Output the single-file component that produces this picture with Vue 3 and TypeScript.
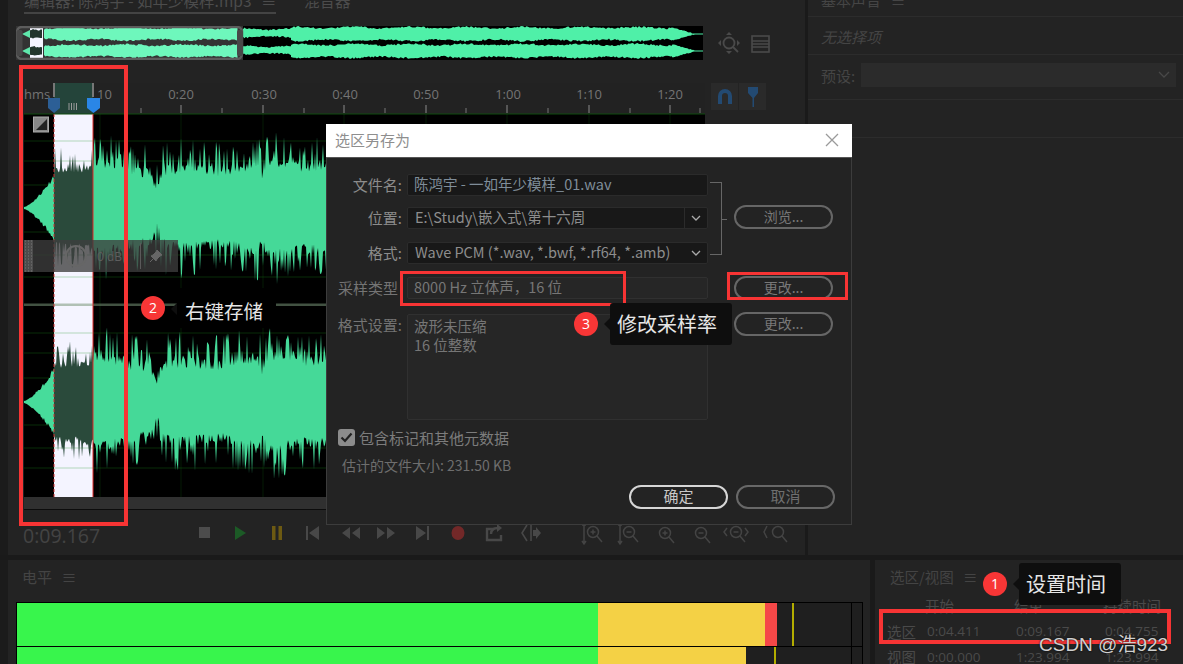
<script setup lang="ts">
function rng(seed: number) {
  let s = seed
  return () => {
    s = (s * 16807) % 2147483647
    return s / 2147483647
  }
}

function band(from: number, to: number, cy: number, seed: number, step: number, env: (x: number, r: () => number) => number): string {
  const r = rng(seed)
  const r2 = rng(seed + 91)
  const top: string[] = []
  const bottom: string[] = []
  for (let x = from; x <= to; x += step) {
    top.push(`${x},${(cy - env(x, r)).toFixed(1)}`)
    bottom.unshift(`${x},${(cy + env(x, r2) * 0.98).toFixed(1)}`)
  }
  return `M${top.join('L')}L${bottom.join('L')}Z`
}

const mainEnv = (x: number, r: () => number) => {
  const a = r()
  const b = r()
  const swell = 4 * Math.sin(x / 37) + 3 * Math.sin(x / 13)
  const dip = 18 * Math.exp(-Math.pow((x - 157) / 4, 2)) + 14 * Math.exp(-Math.pow((x - 262) / 3, 2))
  const spike = b > 0.5 ? Math.pow(a, 1.1) * 38 : a * 11
  return 35 + swell + spike - dip
}
const selEnv = (x: number, r: () => number) => 8 + mainEnv(x, r) * 0.72
const introEnv = (x: number, r: () => number) => {
  const t = (x - 24) / 30
  return 1 + Math.pow(t, 1.5) * 28 + r() * 6 * t
}

const waves = [208, 402].map((cy, i) => ({
  intro: band(24, 54, cy, 11 + i, 1, introEnv),
  sel: band(54, 93, cy, 37 + i, 1, selEnv),
  rest: band(93, 705, cy, 71 + i * 13, 1, mainEnv),
}))

function strip(from: number, to: number, cy: number, seed: number, base: number): string {
  const env = (x: number, r: () => number) => base + r() * 1.8 + 0.8 * Math.sin(x / 9)
  return band(from, to, cy, seed, 1.5, env)
}
const fade = (x: number, r: () => number) => Math.max(0.5, (694 - x) * 0.28 + r())

const overview = {
  hi: [strip(44, 238, 34, 5, 5), strip(44, 238, 51, 6, 5)],
  lo: [strip(243, 291, 33, 7, 3), strip(243, 291, 50, 8, 3), strip(291, 672, 34, 9, 5.5), strip(291, 672, 51, 10, 5.5)],
  intro: [band(22, 30, 34, 3, 1, (x) => (x - 22) * 0.5), band(22, 30, 51, 4, 1, (x) => (x - 22) * 0.5)],
  sel: [strip(30, 43, 34, 1, 4), strip(30, 43, 51, 2, 4)],
  tail: [band(672, 703, 34, 12, 1, fade), band(672, 703, 51, 13, 1, fade)],
}

const gridLines = [141, 161, 185, 232, 255, 277, 333, 353, 378, 425, 448, 468]
const vLines = [100, 181, 263, 344, 426, 507, 589, 670]
const labels = [
  { x: 181, t: '0:20' }, { x: 264, t: '0:30' }, { x: 345, t: '0:40' }, { x: 426, t: '0:50' },
  { x: 508, t: '1:00' }, { x: 589, t: '1:10' }, { x: 670, t: '1:20' },
]
const minor = [141, 222, 304, 385, 466, 548, 630, 700]
</script>

<template>
  <div class="screen">
    <div class="top">
      <div class="gutter"></div>
      <section class="main">
        <div class="tabs">
          <span class="tab active">编辑器: 陈鸿宇 - 如年少模样.mp3 <i class="menu">≡</i></span>
          <span class="tab">混音器</span>
        </div>
        <div class="overview-row">
          <svg class="overview" width="687" height="34" viewBox="16 26 687 34">
            <rect x="16" y="26" width="687" height="34" fill="#000" />
            <rect x="16" y="26" width="227" height="34" fill="#333" />
            <rect x="30" y="27" width="13" height="32" fill="#f4f4ff" />
            <path v-for="(d, i) in overview.intro" :key="'a' + i" :d="d" fill="#5fe8ac" />
            <path v-for="(d, i) in overview.sel" :key="'b' + i" :d="d" fill="#22352d" />
            <path v-for="(d, i) in overview.hi" :key="'c' + i" :d="d" fill="#6ef7bc" />
            <path v-for="(d, i) in overview.lo" :key="'d' + i" :d="d" fill="#4ff0a8" />
            <path v-for="(d, i) in overview.tail" :key="'e' + i" :d="d" fill="#4ff0a8" />
            <rect x="17" y="27" width="225" height="32" rx="5" fill="none" stroke="#5c5c5c" stroke-width="2.5" />
            <rect x="16.5" y="30" width="6" height="26" rx="2" fill="#484848" />
            <rect x="237" y="30" width="6" height="26" rx="2" fill="#484848" />
          </svg>
          <svg class="ov-icons" width="60" height="24" viewBox="0 0 60 24">
            <g fill="none" stroke="#4a4a4a" stroke-width="1.8">
              <circle cx="15" cy="12" r="5.5" />
              <path d="M19 16l5 5" />
            </g>
            <path d="M15 1l3 3h-6zM15 23l3-3h-6zM4 12l3-3v6zM26 12l-3-3v6z" fill="#4a4a4a" />
            <rect x="38" y="5" width="17" height="16" fill="none" stroke="#4a4a4a" stroke-width="1.6" />
            <path d="M38 10h17M38 13h17M38 16h17" stroke="#4a4a4a" stroke-width="1.6" />
          </svg>
        </div>
        <div class="editor">
          <div class="editor-left">
            <svg class="wave" width="681" height="414" viewBox="24 83 681 414">
              <rect x="24" y="83" width="681" height="31" fill="#222" />
              <rect x="54" y="83" width="39" height="31" fill="#24443a" />
              <rect x="24" y="114" width="681" height="383" fill="#000" />
              <rect x="54" y="114" width="39" height="383" fill="#f4f4ff" />
              <line x1="24" x2="705" y1="114" y2="114" stroke="#0e4a0e" />
              <line v-for="y in gridLines" :key="y" x1="24" x2="705" :y1="y" :y2="y" stroke="rgba(30,150,30,.3)" />
              <line v-for="x in vLines" :key="x" :x1="x" :x2="x" y1="114" y2="497" stroke="rgba(30,150,30,.18)" />
              <rect x="24" y="303.5" width="681" height="2.5" fill="rgba(120,150,120,.55)" />
              <g v-for="(w, i) in waves" :key="i">
                <path :d="w.intro" fill="#47dc9b" />
                <path :d="w.sel" fill="#2a4a3b" />
                <path :d="w.rest" fill="#45d998" />
              </g>
              <line x1="54" x2="54" y1="114" y2="497" stroke="#c33" stroke-dasharray="3 2" />
              <line x1="93" x2="93" y1="114" y2="497" stroke="#e02a2a" />
              <rect x="33.5" y="117" width="15" height="15" fill="#888" stroke="#aaa" />
              <path d="M36 130l11-11v11z" fill="#222" />
              <text x="24" y="99" class="rt">hms</text>
              <text x="97" y="99" class="rt">10</text>
              <text v-for="l in labels" :key="l.t" :x="l.x" y="99" class="rt" text-anchor="middle">{{ l.t }}</text>
              <line v-for="x in vLines.slice(1)" :key="'t' + x" :x1="x" :x2="x" y1="105" y2="113" stroke="#8a8a8a" />
              <line v-for="x in minor" :key="'m' + x" :x1="x" :x2="x" y1="108" y2="113" stroke="#777" />
              <path d="M54 83v14M93 83v14" stroke="#777" stroke-width="2" />
              <path d="M48 98h12v10l-6 5-6-5z" fill="#2c5f96" />
              <path d="M87 98h13v10l-6.5 5-6.5-5z" fill="#2a86e6" />
              <path d="M69 103v7M71.5 103v7M74 103v7M76.5 103v7" stroke="#999" />
            </svg>
            <div class="hud">
              <span class="grip"></span>
              <svg width="30" height="30" viewBox="0 0 30 30">
                <circle cx="15" cy="15" r="10" fill="none" stroke="#666" stroke-width="2" />
                <path d="M15 8v10" stroke="#666" stroke-width="2" />
              </svg>
              <span class="hud-text">0 dB</span>
              <span class="hud-line"></span>
              <svg class="pin" width="14" height="14" viewBox="0 0 14 14">
                <path d="M8 1l5 5-2 1-3 3-1 2-5-5 2-1 3-3zM4 10l-3 3" fill="#666" stroke="#666" />
              </svg>
            </div>
          </div>
          <div class="snap">
            <span class="snap-btn">
              <svg width="18" height="18" viewBox="0 0 18 18">
                <path d="M2 16V8a7 7 0 0 1 14 0v8h-4V8a3 3 0 0 0-6 0v8z" fill="#234a72" />
              </svg>
            </span>
            <span class="snap-btn">
              <svg width="18" height="22" viewBox="0 0 18 22">
                <path d="M4 1h10v6l-4 5v9H8.500V12L4 7z" fill="#234a72" />
              </svg>
            </span>
          </div>
        </div>
        <div class="scrollbar"></div>
        <div class="transport">
          <span class="time">0:09.167</span>
          <svg width="600" height="30" viewBox="195 518 600 30">
            <rect x="199" y="526" width="11" height="11" fill="#4c4c4c" />
            <path d="M235 525l11 7-11 7z" fill="#1c5a26" />
            <path d="M272 525h3.500v14H272zM278.500 525h3.500v14h-3.500z" fill="#6d5a12" />
            <g fill="#484848">
              <path d="M306 525h2v14h-2zM319 525v14l-10-7z" />
              <path d="M350 526v12l-8-6zM360 526v12l-8-6z" />
              <path d="M377 526v12l8-6zM387 526v12l8-6z" />
              <path d="M416 525v14l10-7zM427 525h2v14h-2z" />
            </g>
            <ellipse cx="458" cy="532" rx="6.500" ry="7" fill="#722828" />
            <g fill="none" stroke="#484848" stroke-width="2.400">
              <path d="M494 528h-7v11h14v-5" />
              <path d="M491 533c0-4 3-6 7-6" />
            </g>
            <path d="M497 523l5 4-5 4z" fill="#484848" />
            <path d="M527 524l-5 8 5 8M531 524v16" fill="none" stroke="#484848" stroke-width="1.600" />
            <path d="M533 529h3v-3l5 6-5 6v-3h-3z" fill="#484848" />
            <g fill="none" stroke="#444" stroke-width="1.500">
              <path d="M584 524v18M582 540l2 3 2-3M582 524h4" />
              <circle cx="593" cy="531" r="5.500" />
              <path d="M597 535l5 6M590.500 531h5M593 528.500v5" />
              <path d="M620 524v18M618 540l2 3 2-3M618 524h4" />
              <circle cx="629" cy="531" r="5.500" />
              <path d="M633 535l5 6M626.500 531h5" />
              <circle cx="665" cy="532" r="5.500" />
              <path d="M669 536l5 6M662.500 532h5M665 529.500v5" />
              <circle cx="701" cy="532" r="5.500" />
              <path d="M705 536l5 6M698.500 532h5" />
              <circle cx="736" cy="531" r="5.500" />
              <path d="M740 535l5 6M733.500 531h5" />
              <path d="M727 527l-3 4 3 4M745 527l3 4-3 4" />
              <circle cx="778" cy="531" r="5.500" />
              <path d="M782 535l5 6M767 525l-3 6 3 6" />
            </g>
          </svg>
        </div>
      </section>
      <div class="vbar"></div>
      <aside class="props">
        <div class="p-row p-title"><span>基本声音 <i class="menu">≡</i></span></div>
        <div class="p-row p-none"><em>无选择项</em></div>
        <div class="p-row p-preset">
          <span class="p-label">预设:</span>
          <span class="p-select"><svg width="12" height="8" viewBox="0 0 12 8"><path d="M1 1l5 5 5-5" fill="none" stroke="#484848" stroke-width="1.300" /></svg></span>
        </div>
        <div class="p-row p-empty"></div>
      </aside>
    </div>
    <div class="bottom">
      <div class="gutter"></div>
      <section class="level">
        <div class="panel-title">电平 <i class="menu">≡</i></div>
        <div class="meter">
          <div class="m-row m1">
            <span class="seg g"></span><span class="seg y y1"></span><span class="seg r"></span>
            <span class="peak p1"></span>
          </div>
          <div class="m-row m2">
            <span class="seg g"></span><span class="seg y y2"></span>
            <span class="peak p2"></span>
          </div>
        </div>
      </section>
      <section class="selview">
        <div class="panel-title">选区/视图 <i class="menu">≡</i></div>
        <div class="sv-grid">
          <span></span><span class="sv-h">开始</span><span class="sv-h">结束</span><span class="sv-h">持续时间</span>
          <span class="sv-l">选区</span><span class="sv-v">0:04.411</span><span class="sv-v">0:09.167</span><span class="sv-v">0:04.755</span>
          <span class="sv-l">视图</span><span class="sv-v">0:00.000</span><span class="sv-v">1:23.994</span><span class="sv-v">1:23.994</span>
        </div>
      </section>
    </div>

    <div class="dialog">
      <header class="d-head">
        <span>选区另存为</span>
        <svg width="14" height="14" viewBox="0 0 14 14"><path d="M1 1l12 12M13 1L1 13" stroke="#9a9a9a" stroke-width="1.300" /></svg>
      </header>
      <div class="d-body">
        <div class="d-group">
          <div class="d-rows">
            <div class="d-row"><label>文件名:</label><div class="field file">陈鸿宇 - 一如年少模样_01.wav</div></div>
            <div class="d-row r2"><label>位置:</label><div class="field split"><span class="f-main">E:\Study\嵌入式\第十六周</span><span class="f-arrow"><svg width="10" height="6" viewBox="0 0 10 6"><path d="M1 1l4 4 4-4" fill="none" stroke="#aaa" stroke-width="1.300" /></svg></span></div></div>
            <div class="d-row r3"><label>格式:</label><div class="field split"><span class="f-main">Wave PCM (*.wav, *.bwf, *.rf64, *.amb)</span><span class="f-arrow plain"><svg width="10" height="6" viewBox="0 0 10 6"><path d="M1 1l4 4 4-4" fill="none" stroke="#aaa" stroke-width="1.300" /></svg></span></div></div>
          </div>
          <div class="bracket"></div>
          <button class="btn browse" type="button">浏览...</button>
        </div>
        <div class="d-row r4">
          <label class="dim">采样类型</label><div class="field ro">8000 Hz 立体声，16 位</div>
          <button class="btn side" type="button">更改...</button>
        </div>
        <div class="d-row r5">
          <label class="dim">格式设置:</label>
          <div class="field ro box">波形未压缩<br />16 位整数</div>
          <button class="btn side" type="button">更改...</button>
        </div>
        <div class="check">
          <span class="cb"><svg width="13" height="11" viewBox="0 0 13 11"><path d="M1.500 5.500l3.500 3.500 6.500-7.500" fill="none" stroke="#222" stroke-width="2.200" /></svg></span>
          <span>包含标记和其他元数据</span>
        </div>
        <div class="size">估计的文件大小: 231.50 KB</div>
        <div class="d-actions">
          <button class="btn ok" type="button">确定</button>
          <button class="btn cancel" type="button">取消</button>
        </div>
      </div>
    </div>

    <div class="mark m-a"></div>
    <div class="mark m-b"></div>
    <div class="mark m-c"></div>
    <div class="mark m-d"></div>

    <div class="note n1"><span class="badge">1</span><span class="tip">设置时间</span></div>
    <div class="note n2"><span class="badge">2</span><span class="tip">右键存储</span></div>
    <div class="note n3"><span class="badge">3</span><span class="tip">修改采样率</span></div>

    <div class="watermark">CSDN @浩923</div>
  </div>
</template>

<style scoped>
.screen {
  position: relative;
  width: 1183px;
  height: 664px;
  overflow: hidden;
  background: #1a1a1a;
  font-family: "Noto Sans CJK SC", "Noto Sans", sans-serif;
  color: #4a4a4a;
}
.top { display: flex; height: 555px; }
.gutter { width: 8px; flex: none; background: #1b1b1b; }
.main { width: 797px; flex: none; background: #232323; display: flex; flex-direction: column; padding-left: 16px; box-sizing: border-box; }
.vbar { width: 3px; flex: none; background: #1a1a1a; }
.menu { font-style: normal; margin-left: 6px; }
.tabs { height: 14px; flex: none; display: flex; gap: 28px; overflow: hidden; font-size: 15.5px; color: #4c4c4c; margin-bottom: 12px; }
.tab { white-space: nowrap; line-height: 0; height: 14px; box-sizing: border-box; }
.tab.active { width: 252px; border-bottom: 2px solid #444; overflow: hidden; padding-top: 0; }
.overview-row { height: 34px; flex: none; display: flex; align-items: center; margin-left: -8px; margin-bottom: 23px; }
.overview { display: block; flex: none; }
.ov-icons { margin-left: 11px; flex: none; }
.editor { display: flex; height: 414px; flex: none; }
.editor-left { position: relative; width: 681px; flex: none; }
.wave { display: block; }
.rt { font-family: "Open Sans", sans-serif; font-size: 13px; fill: #747474; }
.hud { position: absolute; left: 0; top: 157px; width: 154px; height: 32px; background: rgba(62, 62, 62, 0.78); display: flex; align-items: center; box-sizing: border-box; }
.grip { width: 9px; height: 32px; background: #4c4c4c radial-gradient(circle, #777 0.7px, transparent 0.8px) center / 3px 3px; flex: none; margin-right: 28px; }
.hud-text { font-family: "Open Sans", sans-serif; font-size: 12px; color: #5e5e5e; margin-left: 6px; }
.hud-line { width: 1px; height: 26px; background: #5a5a5a; margin-left: 18px; }
.pin { margin-left: 8px; flex: none; }
.snap { display: flex; height: 27px; margin-left: 6px; }
.snap-btn { width: 27px; height: 27px; background: #2a2a2a; display: flex; align-items: center; justify-content: center; border-right: 1px solid #232323; }
.scrollbar { height: 12px; width: 681px; flex: none; background: #303030; border-bottom: 1px solid #0c0c0c; }
.transport { flex: 1; display: flex; align-items: center; margin-left: -1px; }
.time { width: 172px; flex: none; font-family: "Open Sans", sans-serif; font-size: 19.5px; color: #434343; margin-top: 5px; }
.transport svg { display: block; margin-top: 2px; }
.props { flex: 1; background: #232323; font-size: 15px; color: #454545; }
.p-row { border-bottom: 1px solid #2c2c2c; box-sizing: border-box; padding-left: 13px; display: flex; align-items: center; }
.p-title { height: 17px; align-items: flex-start; overflow: hidden; }
.p-title span { line-height: 0; height: 15px; }
.p-none { height: 38px; }
.p-none em { font-style: italic; margin-top: 2px; }
.p-preset { height: 45px; gap: 6px; padding-bottom: 4px; }
.p-label { white-space: nowrap; flex: none; }
.p-select { width: 315px; height: 24px; background: #2b2b2b; display: flex; align-items: center; justify-content: flex-end; padding-right: 6px; box-sizing: border-box; flex: none; }
.p-empty { height: 38px; }
.bottom { display: flex; height: 104px; margin-top: 5px; }
.level { width: 862px; flex: none; background: #232323; }
.panel-title { font-size: 15px; color: #444; padding: 7px 0 0 14px; line-height: 20px; height: 42px; box-sizing: border-box; }
.meter { position: relative; margin-left: 8px; width: 847px; height: 62px; background: #1f1f1f; border: 1px solid #000; border-bottom: 0; box-sizing: border-box; }
.meter::after { content: ""; position: absolute; left: 834px; top: 0; bottom: 0; width: 1px; background: #000; }
.m-row { position: relative; display: flex; border-bottom: 1px solid #000; }
.m1 { height: 43px; }
.m2 { height: 20px; }
.seg { display: block; height: 100%; }
.g { width: 581px; background: #38f54c; }
.y { background: #f4d145; }
.y1 { width: 167px; }
.y2 { width: 148px; }
.r { width: 12px; background: #f54848; }
.peak { position: absolute; top: 0; bottom: 0; width: 2px; background: #b3ad00; }
.p1 { left: 775px; }
.p2 { left: 757px; }
.selview { margin-left: 5px; flex: 1; background: #232323; }
.selview .panel-title { padding-left: 15px; height: 33px; font-size: 14.5px; }
.sv-grid { display: grid; grid-template-columns: 38px 89px 89px 80px; padding-left: 12px; grid-auto-rows: 25.5px; align-items: center; font-family: "Open Sans", "Noto Sans CJK SC", sans-serif; font-size: 13px; color: #4a4a4a; }
.sv-h { font-family: "Noto Sans CJK SC", sans-serif; font-size: 14.5px; }
.sv-l { font-family: "Noto Sans CJK SC", sans-serif; font-size: 14.5px; }
.sv-v { padding-left: 2px; font-size: 13.5px; white-space: nowrap; }

.dialog { position: absolute; left: 326px; top: 124px; width: 526px; height: 401px; background: #232323; border: 1px solid #3c3c3c; border-top: 0; box-sizing: border-box; display: flex; flex-direction: column; }
.d-head { height: 34px; flex: none; margin: 0 -1px; background: #fff; display: flex; align-items: center; justify-content: space-between; padding: 0 13px 2px 9px; font-size: 15px; color: #8e8e8e; border-bottom: 1px solid #555; box-sizing: border-box; }
.d-body { flex: 1; padding-top: 16px; font-size: 15px; color: #8a8a8a; position: relative; }
.d-group { display: flex; }
.d-rows { flex: none; }
.d-row { display: flex; align-items: center; height: 22px; }
.d-row label { width: 75px; margin-right: 5px; text-align: right; flex: none; color: #8c8c8c; white-space: nowrap; padding-bottom: 1px; }
.d-row label.dim { color: #747474; width: 71px; margin-right: 9px; }
.r5 label.dim { width: 75px; margin-right: 5px; }
.r2 { margin-top: 11px; }
.r3 { margin-top: 13px; }
.r4 { margin-top: 13px; }
.r5 { margin-top: 15px; align-items: flex-start; height: 106px; }
.field { width: 301px; height: 22px; flex: none; background: #181818; border: 1px solid #2b2b2b; border-radius: 2px; box-sizing: border-box; padding-left: 6px; line-height: 18px; font-size: 14.5px; color: #8d8d8d; white-space: nowrap; }
.file { color: #7f8d99; }
.split { display: flex; padding: 0; }
.f-main { flex: 1; padding-left: 7px; }
.f-arrow { width: 22px; flex: none; display: flex; align-items: center; justify-content: center; border-left: 1px solid #2b2b2b; }
.f-arrow.plain { border-left: 0; }
.ro { background: #262626; border-color: #303030; color: #767676; }
.box { height: 106px; line-height: 19px; padding-top: 1px; white-space: normal; }
.bracket { position: relative; width: 12px; height: 73px; margin: 8px 0 0 2px; border: 1px solid #666; border-left: 0; box-sizing: border-box; flex: none; }
.bracket::after { content: ""; position: absolute; right: 0; top: 36px; width: 6px; height: 1px; background: #666; transform: translateX(6px); }
.btn { font-family: inherit; font-size: 14px; color: #787878; background: transparent; border: 2px solid #666; border-radius: 12px; height: 24px; padding: 0 0 2px; box-sizing: border-box; line-height: 18px; flex: none; }
.browse { width: 99px; margin: 31px 0 0 12px; }
.side { width: 99px; margin-left: 26px; }
.r5 .side { margin-top: -2px; }
.check { display: flex; align-items: center; gap: 4px; margin: 8px 0 0 11px; height: 18px; color: #7c7c7c; }
.cb { width: 17px; height: 17px; background: #8c8c8c; border-radius: 3px; display: flex; align-items: center; justify-content: center; }
.size { margin: 9px 0 0 15px; height: 20px; line-height: 20px; font-size: 14px; color: #6e6e6e; }
.d-actions { display: flex; gap: 8px; margin: 10px 0 0 302px; }
.ok { width: 99px; color: #c8c8c8; border-color: #d6d6d6; font-size: 15px; }
.cancel { width: 99px; color: #6f6f6f; border-color: #686868; font-size: 15px; }

.mark { position: absolute; border: 4px solid #f73434; box-sizing: border-box; }
.m-a { left: 19px; top: 65px; width: 109px; height: 461px; }
.m-b { left: 400px; top: 271px; width: 226px; height: 35px; border-width: 3px; }
.m-c { left: 727px; top: 272px; width: 121px; height: 28px; border-width: 3px; }
.m-d { left: 879px; top: 609px; width: 292px; height: 35px; }

.note { position: absolute; display: flex; align-items: center; }
.badge { width: 24px; height: 24px; border-radius: 50%; background: #f83636; color: #fff; font-family: "Open Sans", sans-serif; font-size: 14px; text-align: center; line-height: 24px; flex: none; }
.tip { position: relative; background: #0e0e0e; color: #e6e6e6; font-size: 20px; height: 42px; line-height: 42px; padding: 0 15px 0 7px; border-radius: 3px; margin-left: 12px; white-space: nowrap; }
.tip::before { content: ""; position: absolute; left: -6px; top: 15px; border: 6px solid transparent; border-left: 0; border-right-color: #0e0e0e; }
.n1 { left: 983px; top: 563px; }
.n2 { left: 141px; top: 288px; }
.n2 .tip { background: #000; padding: 0 13px 0 8px; margin-left: 12px; font-size: 19.500px; height: 40px; line-height: 46px; }
.n3 { left: 574px; top: 303px; }
.watermark { position: absolute; left: 1039px; top: 632px; font-family: "Liberation Sans", "Noto Sans CJK SC", sans-serif; font-size: 19px; line-height: 26px; color: #d0d0d0; text-shadow: 0 0 2px #000; white-space: nowrap; }
</style>
